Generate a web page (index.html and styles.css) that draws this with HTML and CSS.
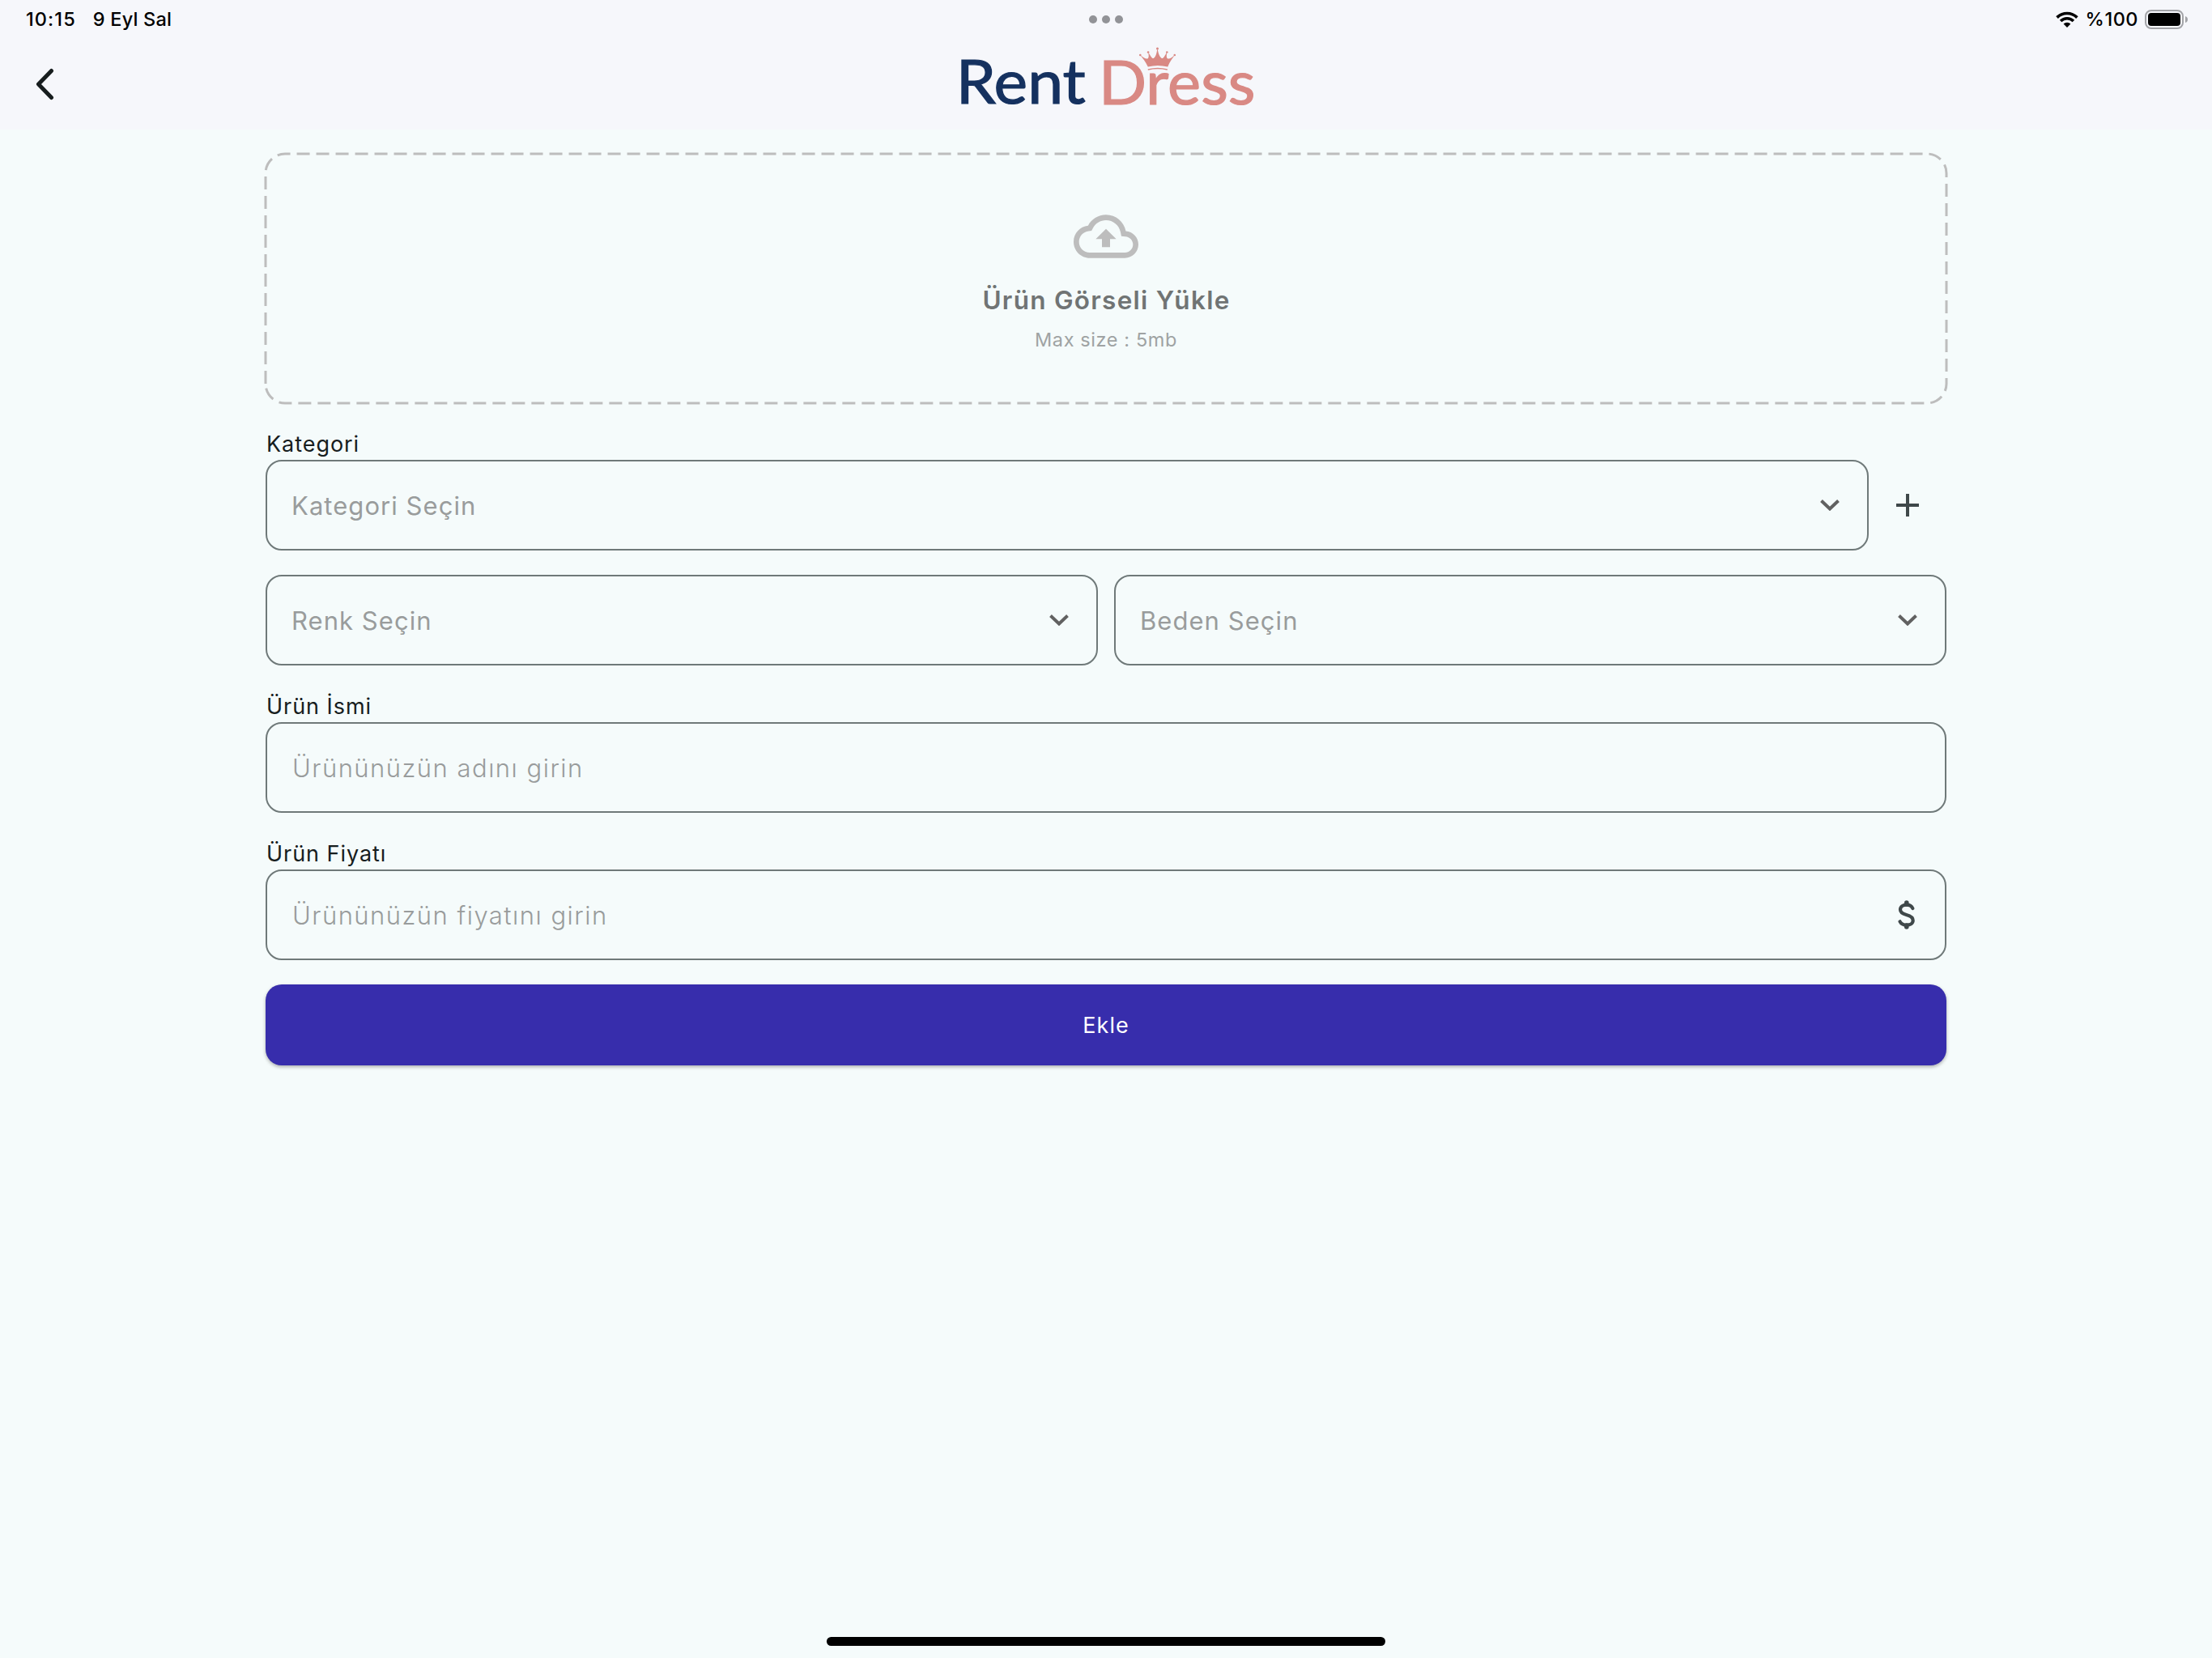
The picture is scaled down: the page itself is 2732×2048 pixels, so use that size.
FILE: index.html
```html
<!DOCTYPE html>
<html lang="tr">
<head>
<meta charset="utf-8">
<title>Rent Dress</title>
<link rel="stylesheet" href="styles.css">
</head>
<body>
<header class="header">
  <div class="status">
    <div class="status-left"><span class="time">10:15</span><span class="date">9 Eyl Sal</span></div>
    <div class="dots"><i></i><i></i><i></i></div>
    <div class="status-right">
      <svg class="wifi" viewBox="0 0 28 20"><path d="M14 20 L9.6 15.6 A6.3 6.3 0 0 1 18.4 15.6 Z"/><path class="arc" d="M1.6 7.6 A17.6 17.6 0 0 1 26.4 7.6"/><path class="arc" d="M6.1 12 A11.2 11.2 0 0 1 21.9 12"/></svg>
      <span class="pct">%100</span>
      <svg class="battery" viewBox="0 0 54 24"><rect class="shell" x="1" y="1" width="46" height="22" rx="7"/><rect x="4" y="4" width="40" height="16" rx="4"/><path class="nub" d="M50 8 Q53 9 53 12 Q53 15 50 16 Z"/></svg>
    </div>
  </div>
  <div class="appbar">
    <svg class="back" viewBox="0 0 24 40"><path d="M19.5 3.5 L3.5 20 L19.5 36.5"/></svg>
    <svg class="logo" viewBox="0 0 376 112">
      <text class="rent" x="2.8" y="80" textLength="160" lengthAdjust="spacingAndGlyphs">Rent</text>
      <text class="dress" x="179" y="80.5" textLength="193.500" lengthAdjust="spacingAndGlyphs">Dress</text>
      <g class="crown" transform="translate(201.8 8)">
        <path d="M38 26.500 C34.500 19 32 17 28.5 12 C32 15 35 17 37.500 16.500 C39.500 15.500 39 12 38.300 8 C41 13 43 16.500 45 16 C48 14 49 9 49.700 3 C50.500 9 52 14 55 16 C57 16.500 59 13 61.500 8 C61 12 60.500 15.500 62.500 16.500 C65 17 68 15 71 12 C68 17 65.500 19 62.500 26.500 Q50 23.500 38 26.500Z"/>
        <circle cx="28.500" cy="12" r="1.300"/><circle cx="38.300" cy="8.500" r="1.300"/><circle cx="49.700" cy="4" r="1.500"/><circle cx="61.500" cy="8.500" r="1.300"/><circle cx="71" cy="12" r="1.300"/>
        <path class="band" d="M38 30 Q50 27 62 30"/>
      </g>
    </svg>
  </div>
</header>
<main class="form">
  <section class="upload">
    <svg class="dash" viewBox="0 0 2080 312"><path d="M2 286 V26 A24 24 0 0 1 26 2 H2054 A24 24 0 0 1 2078 26 V286 A24 24 0 0 1 2054 310 H26 A24 24 0 0 1 2 286Z"/></svg>
    <svg class="cloud" viewBox="0 0 24 24"><path d="M19.350 10.040C18.670 6.590 15.640 4 12 4 9.110 4 6.600 5.640 5.350 8.040 2.340 8.360 0 10.910 0 14c0 3.310 2.690 6 6 6h13c2.760 0 5-2.240 5-5 0-2.640-2.050-4.780-4.650-4.960zM19 18H6c-2.210 0-4-1.790-4-4 0-2.050 1.530-3.760 3.560-3.970l1.070-.110.500-.950C8.080 7.140 9.940 6 12 6c2.620 0 4.880 1.860 5.390 4.430l.300 1.500 1.530.110c1.560.100 2.780 1.410 2.780 2.960 0 1.650-1.350 3-3 3zM8.200 13h2.300v3h3v-3h2.300L12 9.200z"/></svg>
    <h2 class="upload-title">Ürün Görseli Yükle</h2>
    <p class="upload-note">Max size : 5mb</p>
  </section>
  <label class="label first">Kategori</label>
  <div class="row">
    <div class="field select wide"><span>Kategori Seçin</span><svg class="chev" viewBox="0 0 24 14"><path d="M1.500 1.500 L12 11.500 L22.500 1.500"/></svg></div>
    <svg class="plus" viewBox="0 0 28 28"><path d="M14 0V28M0 14H28"/></svg>
  </div>
  <div class="row pair">
    <div class="field select"><span>Renk Seçin</span><svg class="chev" viewBox="0 0 24 14"><path d="M1.500 1.500 L12 11.500 L22.500 1.500"/></svg></div>
    <div class="field select"><span>Beden Seçin</span><svg class="chev" viewBox="0 0 24 14"><path d="M1.500 1.500 L12 11.500 L22.500 1.500"/></svg></div>
  </div>
  <label class="label">Ürün İsmi</label>
  <div class="field input"><span>Ürününüzün adını girin</span></div>
  <label class="label">Ürün Fiyatı</label>
  <div class="field input"><span>Ürününüzün fiyatını girin</span>
    <svg class="dollar" viewBox="0 0 22 36"><path d="M18.300 10 C17 6.800 14 5.600 10.800 5.600 C6.500 5.600 3 7.800 3 11.500 C3 15.500 6 16.800 10.500 18 C15.500 19.300 18.700 21 18.700 25 C18.700 28.700 15 30.600 11 30.600 C7 30.600 4 29.200 2.600 26.300"/><path class="tips" d="M10.800 3V5M10.800 31V33"/></svg>
  </div>
  <button class="submit">Ekle</button>
</main>
<div class="home"></div>
</body>
</html>
```
FILE: styles.css
```css
* { box-sizing: border-box; margin: 0; padding: 0; }
body { width: 2732px; height: 2048px; overflow: hidden; display: flex; flex-direction: column; background: #f5fbfb; font-family: Inter, "Liberation Sans", sans-serif; }
svg { display: block; flex: none; }
.header { height: 160px; background: #f6f7fb; flex: none; }
.status { height: 48px; display: grid; grid-template-columns: 1fr auto 1fr; align-items: center; padding: 0 29px; font-size: 23.5px; font-weight: 500; line-height: 48px; color: #000; }
.status-left { display: flex; gap: 21px; padding-left: 3px; }
.time { letter-spacing: 1.100px; }
.date { letter-spacing: .2px; }
.status-right { display: flex; justify-content: flex-end; align-items: center; }
.dots { display: flex; gap: 6px; }
.dots i { width: 10px; height: 10px; border-radius: 50%; background: #929397; }
.wifi { width: 28px; height: 20px; margin-right: 9px; }
.wifi .arc { fill: none; stroke: #000; stroke-width: 3.600; }
.pct { margin-right: 8px; letter-spacing: .500px; }
.battery { width: 54px; height: 24px; }
.shell { fill: none; stroke: #a3a4a8; stroke-width: 2; }
.nub { fill: #a3a4a8; }
.appbar { height: 112px; display: grid; grid-template-columns: 1fr auto 1fr; align-items: center; padding-left: 44px; }
.back { width: 24px; height: 40px; }
.back path { fill: none; stroke: #171d1e; stroke-width: 5; stroke-linecap: round; stroke-linejoin: round; }
.logo { width: 376px; height: 112px; margin-right: 44px; }
.logo text { font-family: Lato, sans-serif; font-size: 75.500px; stroke-width: 1.200; }
.rent { fill: #15315f; stroke: #15315f; }
.dress { fill: #d98984; stroke: #d98984; }
.crown { fill: #d98984; }
.band { fill: none; stroke: #d98984; stroke-width: 1.300; }
.form { width: 2076px; margin: 28px auto 0; display: flex; flex-direction: column; }
.upload { position: relative; height: 312px; margin: 0 -2px; display: flex; flex-direction: column; align-items: center; padding-top: 64px; }
.dash { position: absolute; inset: 0; width: 2080px; height: 312px; }
.dash path { fill: none; stroke: #bdbdbd; stroke-width: 3; stroke-dasharray: 16 8; }
.cloud { width: 80px; height: 80px; fill: #bdbdbd; }
.upload-title { margin: 19px 0 0 1px; font-size: 31.500px; line-height: 40px; font-weight: 600; letter-spacing: 1.280px; color: #707474; }
.upload-note { margin-top: 14px; font-size: 23.500px; line-height: 30px; letter-spacing: .600px; color: #9fa3a3; }
.label { height: 40px; margin-top: 30px; padding-left: 1px; line-height: 42px; font-size: 27px; letter-spacing: .950px; color: #171d1e; }
.first { margin-top: 28px; }
.row { display: flex; align-items: center; }
.pair { margin-top: 30px; gap: 20px; }
.field { flex: 1; height: 112px; border: 2px solid #6f7979; border-radius: 20px; display: flex; align-items: center; justify-content: space-between; padding: 0 34px 0 31px; font-size: 31px; letter-spacing: 1.050px; color: #999c9c; }
.select { padding-left: 30px; }
.input { flex: none; font-weight: 350; letter-spacing: 1.480px; }
.wide { flex: none; width: 1980px; }
.chev { width: 24px; height: 14px; }
.chev path { fill: none; stroke: #616161; stroke-width: 4; }
.plus { width: 28px; height: 28px; margin-left: 34px; }
.plus path { stroke: #3f484a; stroke-width: 4; }
.dollar { width: 22px; height: 36px; margin-right: 2px; }
.dollar path { fill: none; stroke: #3f484a; stroke-width: 4.200; stroke-linecap: round; }
.dollar .tips { stroke-width: 5.600; }
.submit { margin-top: 30px; height: 100px; border: 0; border-radius: 20px; background: #372dac; color: #fff; font: 400 27px Inter, sans-serif; letter-spacing: 1px; box-shadow: 0 2px 4px rgba(0,0,0,.3); }
.home { width: 690px; height: 11px; margin: auto auto 15px; border-radius: 5.500px; background: #000; }
```
